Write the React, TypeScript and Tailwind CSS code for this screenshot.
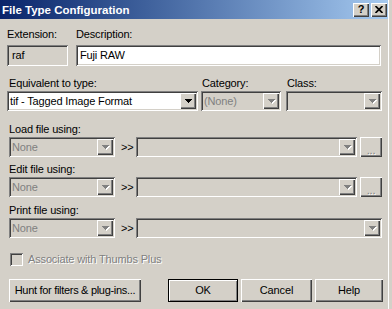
import React from "react";

const RAISED =
  "shadow-[inset_1px_1px_0_#fff,inset_-1px_-1px_0_#404040,inset_-2px_-2px_0_#808080]";
const SUNKEN =
  "shadow-[inset_1px_1px_0_#808080,inset_-1px_-1px_0_#fff,inset_2px_2px_0_#404040,inset_-2px_-2px_0_#d4d0c8]";

function Arrow({ disabled }: { disabled?: boolean }) {
  const c = disabled ? "#808080" : "#000";
  return (
    <svg width="8" height="5" viewBox="0 0 8 5" className="block" shapeRendering="crispEdges">
      {disabled && (
        <g fill="#fff">
          <rect x="1" y="1" width="7" height="1" />
          <rect x="2" y="2" width="5" height="1" />
          <rect x="3" y="3" width="3" height="1" />
          <rect x="4" y="4" width="1" height="1" />
        </g>
      )}
      <g fill={c}>
        <rect x="0" y="0" width="7" height="1" />
        <rect x="1" y="1" width="5" height="1" />
        <rect x="2" y="2" width="3" height="1" />
        <rect x="3" y="3" width="1" height="1" />
      </g>
    </svg>
  );
}

function Combo({
  className,
  text,
  white,
  disabled,
}: {
  className: string;
  text?: string;
  white?: boolean;
  disabled?: boolean;
}) {
  return (
    <div
      className={`h-[20px] flex items-center pl-[3px] ${SUNKEN} ${
        white ? "bg-white" : "bg-[#d4d0c8]"
      } ${className}`}
    >
      <span className={`whitespace-nowrap ${disabled ? "text-[#808080]" : "text-black"}`}>
        {text}
      </span>
      <div
        className={`ml-auto mr-[2px] w-[16px] h-[16px] flex items-center justify-center pl-px bg-[#d4d0c8] ${RAISED}`}
      >
        <Arrow disabled={disabled} />
      </div>
    </div>
  );
}

function DotsButton() {
  return (
    <div
      className={`w-[22px] h-[20px] flex items-end justify-center pb-[3px] bg-[#d4d0c8] ${RAISED}`}
    >
      <span className="text-[#808080] leading-[8px] [text-shadow:1px_1px_0_#fff]">...</span>
    </div>
  );
}

function Button({
  className,
  children,
  def,
}: {
  className: string;
  children: React.ReactNode;
  def?: boolean;
}) {
  if (def) {
    return (
      <div className={`h-[23px] border border-black bg-[#d4d0c8] ${className}`}>
        <div className="w-full h-full flex items-center justify-center shadow-[inset_1px_1px_0_#fff,inset_-1px_-1px_0_#808080]">
          {children}
        </div>
      </div>
    );
  }
  return (
    <div
      className={`h-[23px] flex items-center justify-center bg-[#d4d0c8] ${RAISED} ${className}`}
    >
      {children}
    </div>
  );
}

export default function App() {
  return (
    <div className="w-[392px] h-[309px] bg-[#d4d0c8] flex overflow-hidden font-['Liberation_Sans',Arial,sans-serif] text-[11px] leading-[13px] tracking-[-0.15px] text-black">
      <div className="w-[388px] flex flex-col">
        {/* Title bar */}
        <div className="h-[19px] bg-linear-to-r from-[#0a246a] to-[#a6caf0] flex items-center pl-[2px] pr-px">
          <span className="text-white font-bold text-[11.5px] leading-[14px] tracking-normal whitespace-nowrap">
            File Type Configuration
          </span>
          <div className="ml-auto flex gap-[2px]">
            <div
              className={`w-[16px] h-[14px] bg-[#d4d0c8] flex items-center justify-center ${RAISED}`}
            >
              <span className="font-bold text-[11px] leading-[11px] tracking-normal -mt-px">?</span>
            </div>
            <div
              className={`w-[16px] h-[14px] bg-[#d4d0c8] flex items-center justify-center ${RAISED}`}
            >
              <svg width="8" height="7" viewBox="0 0 8 7" className="block -mt-px">
                <path d="M0.5 0 L7.5 7 M7.5 0 L0.5 7" stroke="#000" strokeWidth="1.7" />
              </svg>
            </div>
          </div>
        </div>

        {/* Content */}
        <div className="flex flex-col pl-[7px]">
          {/* Extension / Description */}
          <div className="flex mt-[9px]">
            <div className="w-[61px] flex flex-col">
              <div className="h-[13px]">Extension:</div>
              <div className={`mt-[4px] h-[21px] flex items-center pl-[5px] bg-[#d4d0c8] ${SUNKEN}`}>
                raf
              </div>
            </div>
            <div className="ml-[8px] w-[305px] flex flex-col">
              <div className="h-[13px]">Description:</div>
              <div className={`mt-[4px] h-[21px] flex items-center pl-[4px] bg-white ${SUNKEN}`}>
                Fuji RAW
              </div>
            </div>
          </div>

          {/* Equivalent / Category / Class */}
          <div className="flex mt-[11px]">
            <div className="w-[191px] flex flex-col">
              <div className="h-[13px] pl-[2px]">Equivalent to type:</div>
              <Combo className="mt-px w-[191px]" white text="tif - Tagged Image Format" />
            </div>
            <div className="ml-[3px] w-[80px] flex flex-col">
              <div className="h-[13px] pl-px">Category:</div>
              <Combo className="mt-px w-[80px]" disabled text="(None)" />
            </div>
            <div className="ml-[5px] w-[96px] flex flex-col">
              <div className="h-[13px] pl-px">Class:</div>
              <Combo className="mt-px w-[96px]" disabled />
            </div>
          </div>

          {/* Load */}
          <div className="h-[13px] mt-[12px] pl-[2px]">Load file using:</div>
          <div className="flex items-center mt-px pl-[2px]">
            <Combo className="w-[106px]" disabled text="None" />
            <span className="ml-[6px] w-[15px]">&gt;&gt;</span>
            <Combo className="w-[221px]" disabled />
            <div className="ml-[3px]">
              <DotsButton />
            </div>
          </div>

          {/* Edit */}
          <div className="h-[13px] mt-[6px] pl-[2px]">Edit file using:</div>
          <div className="flex items-center mt-px pl-[2px]">
            <Combo className="w-[106px]" disabled text="None" />
            <span className="ml-[6px] w-[15px]">&gt;&gt;</span>
            <Combo className="w-[221px]" disabled />
            <div className="ml-[3px]">
              <DotsButton />
            </div>
          </div>

          {/* Print */}
          <div className="h-[13px] mt-[7px] pl-[2px]">Print file using:</div>
          <div className="flex items-center mt-px pl-[2px]">
            <Combo className="w-[106px]" disabled text="None" />
            <span className="ml-[6px] w-[15px]">&gt;&gt;</span>
            <Combo className="w-[246px]" disabled />
          </div>

          {/* Checkbox */}
          <div className="flex items-center mt-[15px] pl-[3px]">
            <div className={`w-[13px] h-[13px] bg-[#d4d0c8] ${SUNKEN}`} />
            <span className="ml-[5px] text-[#808080] [text-shadow:1px_1px_0_#fff]">
              Associate with Thumbs Plus
            </span>
          </div>

          {/* Buttons */}
          <div className="flex mt-[13px] pl-[2px]">
            <Button className="w-[132px]">
              <span className="tracking-[-0.3px]">Hunt for filters &amp; plug-ins...</span>
            </Button>
            <Button className="ml-[27px] w-[70px]" def>
              OK
            </Button>
            <Button className="ml-[3px] w-[71px]">Cancel</Button>
            <Button className="ml-[3px] w-[68px]">Help</Button>
          </div>
        </div>
      </div>
      <div className="w-px bg-white" />
    </div>
  );
}
